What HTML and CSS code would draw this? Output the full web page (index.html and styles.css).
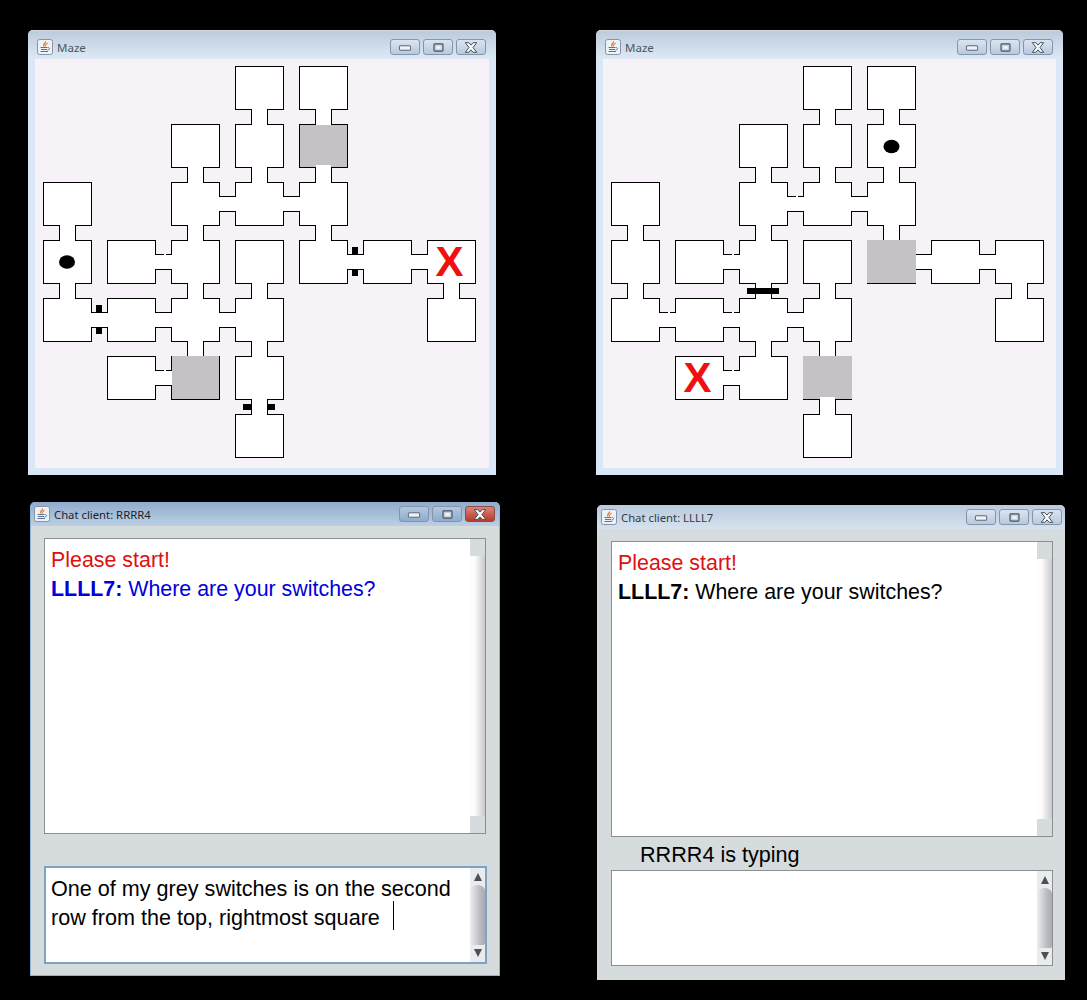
FILE: index.html
```html
<!DOCTYPE html>
<html lang="en">
<head>
  <meta charset="UTF-8">
  <meta name="viewport" content="width=device-width, initial-scale=1.0">
  <title>Maze and chat</title>
  <link rel="stylesheet" href="styles.css">
</head>
<body>

  <!-- shared drawings -->
  <svg class="defs" width="0" height="0" aria-hidden="true">
    <defs>
      <g id="maze">
        <!-- rooms -->
        <rect x="201" y="8" width="47" height="42"/>
        <rect x="265" y="8" width="47" height="42"/>
        <rect x="137" y="66" width="47" height="42"/>
        <rect x="201" y="66" width="47" height="42"/>
        <rect x="265" y="66" width="47" height="42"/>
        <rect x="9" y="124" width="47" height="42"/>
        <rect x="137" y="124" width="47" height="42"/>
        <rect x="201" y="124" width="47" height="42"/>
        <rect x="265" y="124" width="47" height="42"/>
        <rect x="9" y="182" width="47" height="42"/>
        <rect x="73" y="182" width="47" height="42"/>
        <rect x="137" y="182" width="47" height="42"/>
        <rect x="201" y="182" width="47" height="42"/>
        <rect x="265" y="182" width="47" height="42"/>
        <rect x="329" y="182" width="47" height="42"/>
        <rect x="393" y="182" width="47" height="42"/>
        <rect x="9" y="240" width="47" height="42"/>
        <rect x="73" y="240" width="47" height="42"/>
        <rect x="137" y="240" width="47" height="42"/>
        <rect x="201" y="240" width="47" height="42"/>
        <rect x="393" y="240" width="47" height="42"/>
        <rect x="73" y="298" width="47" height="42"/>
        <rect x="137" y="298" width="47" height="42"/>
        <rect x="201" y="298" width="47" height="42"/>
        <rect x="201" y="356" width="47" height="42"/>
        <!-- corridors, up and down -->
        <rect x="217" y="46" width="15" height="24"/>
        <rect x="281" y="46" width="15" height="24"/>
        <rect x="153" y="104" width="15" height="24"/>
        <rect x="217" y="104" width="15" height="24"/>
        <rect x="281" y="104" width="15" height="24"/>
        <rect x="25" y="162" width="15" height="24"/>
        <rect x="153" y="162" width="15" height="24"/>
        <rect x="281" y="162" width="15" height="24"/>
        <rect x="25" y="220" width="15" height="24"/>
        <rect x="153" y="220" width="15" height="24"/>
        <rect x="217" y="220" width="15" height="24"/>
        <rect x="409" y="220" width="15" height="24"/>
        <rect x="153" y="278" width="15" height="24"/>
        <rect x="217" y="278" width="15" height="24"/>
        <rect x="217" y="336" width="15" height="24"/>
        <!-- corridors, left and right -->
        <rect x="180" y="138" width="25" height="14"/>
        <rect x="244" y="138" width="25" height="14"/>
        <rect x="116" y="196" width="25" height="14"/>
        <rect x="308" y="196" width="25" height="14"/>
        <rect x="372" y="196" width="25" height="14"/>
        <rect x="52" y="254" width="25" height="14"/>
        <rect x="116" y="254" width="25" height="14"/>
        <rect x="180" y="254" width="25" height="14"/>
        <rect x="116" y="312" width="25" height="14"/>
      </g>
      <symbol id="java" viewBox="0 0 16 16">
        <rect x="0.5" y="0.5" width="15" height="15" rx="2" fill="#eef2f7" stroke="#8493a6"/>
        <path d="M8.5 2.5C9.5 4 6.5 5 7 7.5C5.5 6 7.5 4 8.5 2.5ZM10.5 4C10 5.5 8 6 8.5 7.5C8 6 9 5 10.5 4Z" fill="#e0701c" stroke="#e0701c" stroke-width="0.6"/>
        <path d="M3.5 8.5H10M4 10.5H10M3.5 12.5H11M10.5 8.5C13.5 8.5 13 11 10.5 11" fill="none" stroke="#5a7396"/>
      </symbol>
      <symbol id="btn-min" viewBox="0 0 12 8">
        <rect x="1" y="2.5" width="10" height="4" rx="1" fill="#eef1f5" stroke="#5d6875" stroke-width="0.9"/>
      </symbol>
      <symbol id="btn-max" viewBox="0 0 12 10">
        <rect x="1" y="1" width="10" height="8" rx="1" fill="#c3d0de" stroke="#47515e" stroke-width="1.3"/>
        <rect x="3.5" y="3.5" width="5" height="3" fill="#f2f4f7"/>
      </symbol>
      <symbol id="btn-close" viewBox="0 0 12 10">
        <path d="M0.8 0.6H4L6 2.8L8 0.6H11.2L7.8 5L11.2 9.4H8L6 7.2L4 9.4H0.8L4.2 5Z" fill="#f6f7f8" stroke="#46505c" stroke-width="0.9"/>
      </symbol>
    </defs>
  </svg>

  <div class="desktop">

    <!-- Maze, player one -->
    <section class="win maze-win maze-left">
      <header class="titlebar">
        <svg class="java-icon"><use href="#java"/></svg>
        <span class="title">Maze</span>
        <div class="buttons">
          <span class="btn"><svg class="ico" width="14" height="9"><use href="#btn-min"/></svg></span>
          <span class="btn"><svg class="ico" width="11" height="9"><use href="#btn-max"/></svg></span>
          <span class="btn"><svg class="ico" width="14" height="11"><use href="#btn-close"/></svg></span>
        </div>
      </header>
      <div class="maze-panel">
        <svg class="maze" viewBox="0 0 454 409" width="454" height="409">
          <use href="#maze" class="maze-line"/>
          <use href="#maze" class="maze-floor"/>
          <rect class="switch" x="265" y="66" width="47" height="42"/>
          <rect class="floor-bit" x="281" y="106" width="15" height="4"/>
          <rect class="switch" x="137" y="297" width="47" height="43"/>
          <rect class="floor-bit" x="129" y="195" width="2" height="1"/>
          <rect class="floor-bit" x="129" y="311" width="2" height="1"/>
          <ellipse class="ball" cx="32" cy="203" rx="8" ry="6.8"/>
          <rect class="door" x="61" y="246" width="6" height="7"/>
          <rect class="door" x="61" y="268" width="6" height="7"/>
          <rect class="door" x="317" y="188" width="6" height="7"/>
          <rect class="door" x="317" y="210" width="6" height="7"/>
          <rect class="door" x="208" y="345" width="8" height="6"/>
          <rect class="door" x="232" y="345" width="8" height="6"/>
          <text class="goal" x="414.5" y="217">X</text>
        </svg>
      </div>
    </section>

    <!-- Maze, player two -->
    <section class="win maze-win maze-right">
      <header class="titlebar">
        <svg class="java-icon"><use href="#java"/></svg>
        <span class="title">Maze</span>
        <div class="buttons">
          <span class="btn"><svg class="ico" width="14" height="9"><use href="#btn-min"/></svg></span>
          <span class="btn"><svg class="ico" width="11" height="9"><use href="#btn-max"/></svg></span>
          <span class="btn"><svg class="ico" width="14" height="11"><use href="#btn-close"/></svg></span>
        </div>
      </header>
      <div class="maze-panel">
        <svg class="maze" viewBox="0 0 454 409" width="454" height="409">
          <use href="#maze" class="maze-line"/>
          <use href="#maze" class="maze-floor"/>
          <rect class="switch" x="264" y="181" width="49" height="43"/>
          <rect class="switch" x="200" y="297" width="49" height="43"/>
          <rect class="floor-bit" x="217" y="338" width="15" height="4"/>
          <rect class="floor-bit" x="193" y="137" width="2" height="1"/>
          <rect class="floor-bit" x="129" y="195" width="2" height="1"/>
          <rect class="floor-bit" x="65" y="253" width="2" height="1"/>
          <rect class="floor-bit" x="129" y="253" width="2" height="1"/>
          <rect class="floor-bit" x="129" y="311" width="2" height="1"/>
          <ellipse class="ball" cx="288.5" cy="87.5" rx="8" ry="6.8"/>
          <rect class="door" x="144" y="229" width="32" height="6"/>
          <text class="goal" x="94.5" y="333">X</text>
        </svg>
      </div>
    </section>

    <!-- Chat, player one (focused) -->
    <section class="win chat-win chat-left">
      <header class="titlebar">
        <svg class="java-icon"><use href="#java"/></svg>
        <span class="title">Chat client: RRRR4</span>
        <div class="buttons">
          <span class="btn"><svg class="ico" width="14" height="9"><use href="#btn-min"/></svg></span>
          <span class="btn"><svg class="ico" width="11" height="9"><use href="#btn-max"/></svg></span>
          <span class="btn btn-close"><svg class="ico" width="14" height="11"><use href="#btn-close"/></svg></span>
        </div>
      </header>
      <div class="chat-body">
        <div class="log">
          <div class="log-text">
            <div class="start">Please start!</div>
            <div class="line-blue"><b>LLLL7:</b> Where are your switches?</div>
          </div>
          <div class="log-scroll"><div class="log-thumb"></div></div>
        </div>
        <div class="status"></div>
        <div class="entry entry-focus">
          <div class="entry-text">One of my grey switches is on the second<br>row from the top, rightmost square<span class="caret"></span></div>
          <div class="entry-scroll">
            <span class="arrow-up"></span>
            <div class="entry-thumb"></div>
            <span class="arrow-down"></span>
          </div>
        </div>
      </div>
    </section>

    <!-- Chat, player two -->
    <section class="win chat-win chat-right">
      <header class="titlebar">
        <svg class="java-icon"><use href="#java"/></svg>
        <span class="title">Chat client: LLLL7</span>
        <div class="buttons">
          <span class="btn"><svg class="ico" width="14" height="9"><use href="#btn-min"/></svg></span>
          <span class="btn"><svg class="ico" width="11" height="9"><use href="#btn-max"/></svg></span>
          <span class="btn"><svg class="ico" width="14" height="11"><use href="#btn-close"/></svg></span>
        </div>
      </header>
      <div class="chat-body">
        <div class="log">
          <div class="log-text">
            <div class="start">Please start!</div>
            <div><b>LLLL7:</b> Where are your switches?</div>
          </div>
          <div class="log-scroll"><div class="log-thumb"></div></div>
        </div>
        <div class="status">RRRR4 is typing</div>
        <div class="entry">
          <div class="entry-text"></div>
          <div class="entry-scroll">
            <span class="arrow-up"></span>
            <div class="entry-thumb"></div>
            <span class="arrow-down"></span>
          </div>
        </div>
      </div>
    </section>

  </div>

</body>
</html>
```

FILE: styles.css
```css
/* Page */
body {
  margin: 0;
  background-color: #000;
  font-family: "Liberation Sans", Arial, sans-serif;
}

.defs {
  position: absolute;
}

.desktop {
  position: relative;
  height: 1000px;
  overflow: hidden;
}

/* Windows */
.win {
  position: absolute;
  display: flex;
  flex-direction: column;
  box-sizing: border-box;
  border-radius: 5px 5px 0 0;
  overflow: hidden;
}

.maze-win {
  height: 445px;
  top: 30px;
  background-color: #d9e7f6;
}

.maze-left {
  left: 28px;
  width: 468px;
}

.maze-right {
  left: 596px;
  width: 467px;
}

.chat-win {
  background-color: #d6dbde;
}

.chat-left {
  left: 30px;
  top: 502px;
  width: 470px;
  height: 474px;
  border: 1px solid #8db4d6;
  border-top: 0;
}

.chat-right {
  left: 597px;
  top: 505px;
  width: 468px;
  height: 475px;
}

/* Title bar */
.titlebar {
  display: flex;
  align-items: center;
  flex: none;
  height: 29px;
  padding: 4px 10px 0 9px;
  border-top: 1px solid #d3d9e0;
  box-sizing: border-box;
  background: linear-gradient(#bccbdc, #dde9f5);
}

.chat-win .titlebar {
  height: 24px;
  padding: 0 3px 0 4px;
  border-top: 0;
  background: linear-gradient(#b9cadd, #d5e2ef);
}

.chat-left .titlebar {
  padding: 0 4px 0 3px;
  background: linear-gradient(#8fabcc, #bcd0e4);
}

.java-icon {
  width: 16px;
  height: 16px;
  flex: none;
}

.title {
  margin-left: 4px;
  font-family: "Noto Sans", sans-serif;
  font-size: 11.5px;
  color: #4a5563;
}

.chat-win .title {
  font-size: 11.3px;
  color: #333b46;
}

.chat-left .title {
  color: #1d232b;
}

.buttons {
  display: flex;
  gap: 3px;
  margin-left: auto;
}

.btn {
  display: flex;
  align-items: center;
  justify-content: center;
  box-sizing: border-box;
  width: 30px;
  height: 16px;
  border: 1px solid #8494ab;
  border-radius: 3px;
  background: linear-gradient(#d9e4f0, #b9cadd);
}

.chat-left .btn {
  background: linear-gradient(#b3c9e1, #8faccd);
}

.chat-left .btn-close {
  border-color: #8b4a46;
  background: linear-gradient(#dc8478, #b5392b);
}

.ico {
  display: block;
}

/* Maze */
.maze-panel {
  flex: 1;
  margin: 0 7px 7px;
  background-color: #f6f2f7;
  overflow: hidden;
}

.maze {
  display: block;
}

.maze-line {
  fill: #000;
  stroke: #000;
  stroke-width: 2;
}

.maze-floor {
  fill: #fff;
}

.switch {
  fill: #c4c2c6;
}

.floor-bit {
  fill: #fff;
}

.ball,
.door {
  fill: #000;
}

.goal {
  font-family: "Liberation Sans", Arial, sans-serif;
  font-size: 42px;
  font-weight: bold;
  text-anchor: middle;
  fill: #f01010;
}

/* Chat */
.chat-body {
  display: flex;
  flex-direction: column;
  padding: 12px 13px 0;
  font-size: 21.6px;
  line-height: 29px;
  color: #000;
}

.chat-right .chat-body {
  padding: 12px 12px 0 14px;
}

.log {
  display: flex;
  box-sizing: border-box;
  width: 442px;
  height: 296px;
  border: 1px solid #8c8f91;
  background-color: #fff;
  font-size: 21.4px;
}

.log-text {
  flex: 1;
  padding: 7px 6px 0;
}

.start {
  color: #dd1111;
}

.line-blue {
  color: #0000dd;
}

.log-scroll {
  display: flex;
  width: 15px;
  padding: 17px 0;
  box-sizing: border-box;
  background-color: #d6dbde;
}

.log-thumb {
  flex: 1;
  background: linear-gradient(to right, #fdfdfd 30%, #c9c9ce);
}

.status {
  height: 32px;
  padding-left: 29px;
  box-sizing: border-box;
  line-height: 36px;
}

.chat-right .status {
  height: 33px;
}

.entry {
  display: flex;
  box-sizing: border-box;
  width: 442px;
  height: 96px;
  border: 1px solid #8c8f91;
  background-color: #fff;
}

.entry-focus {
  width: 443px;
  height: 98px;
  border: 2px solid #7da2c2;
}

.entry-text {
  flex: 1;
  padding: 6px 5px 0;
}

.caret {
  display: inline-block;
  width: 1px;
  height: 29px;
  margin-top: -10px;
  margin-left: 13px;
  vertical-align: -5px;
  background-color: #000;
}

.entry-scroll {
  display: flex;
  flex-direction: column;
  align-items: center;
  justify-content: space-between;
  width: 15px;
  padding: 5px 0;
  box-sizing: border-box;
  background-color: #e9ebed;
}

.entry-thumb {
  width: 15px;
  height: 60px;
  border-radius: 7px 7px 2px 2px / 6px 6px 2px 2px;
  background: linear-gradient(to right, #eeeef1, #bfc0c6 60%, #a9aab2);
}

.arrow-up,
.arrow-down {
  width: 0;
  height: 0;
  border-left: 4px solid transparent;
  border-right: 4px solid transparent;
}

.arrow-up {
  border-bottom: 8px solid #4c5157;
}

.arrow-down {
  border-top: 8px solid #4c5157;
}
```
